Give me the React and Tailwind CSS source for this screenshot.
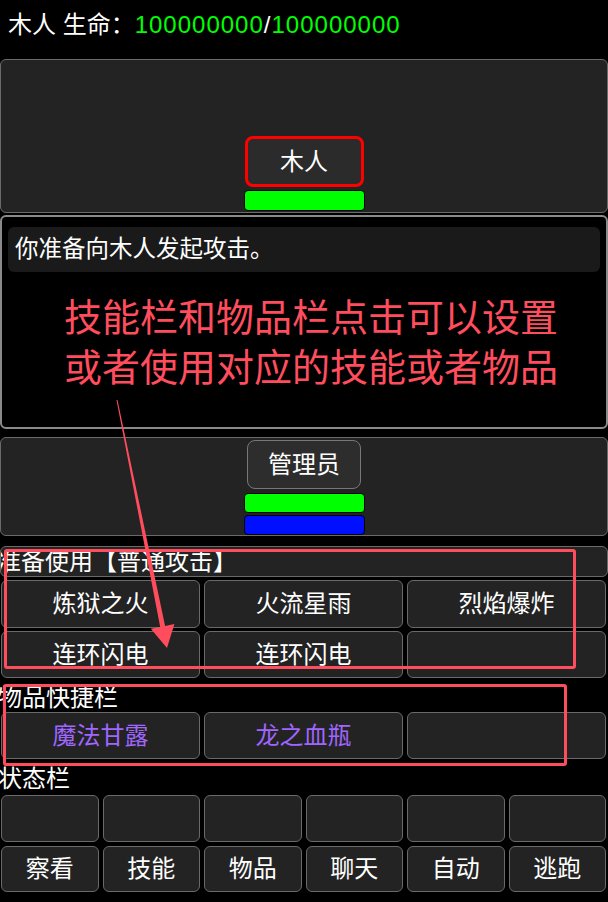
const font = { fontFamily: '"Liberation Sans", "Noto Sans CJK SC", sans-serif' };

const skills = ['炼狱之火', '火流星雨', '烈焰爆炸', '连环闪电', '连环闪电', ''];
const items = ['魔法甘露', '龙之血瓶', ''];
const actions = ['察看', '技能', '物品', '聊天', '自动', '逃跑'];

const Cell = ({ children, className = '' }) => (
  <div
    className={`flex items-center justify-center rounded-[6px] border border-[#6a6a6a] bg-[#232323] text-[24px] ${className}`}
  >
    {children}
  </div>
);

const Bar = ({ color }) => (
  <div className={`h-[20px] w-[121px] rounded-[4px] border border-black ${color}`} />
);

export default function App() {
  return (
    <div
      className="relative h-[902px] w-[608px] overflow-hidden bg-black text-white"
      style={font}
    >
      {/* 标题 */}
      <div className="flex h-[59px] items-start pl-[8px] pt-[10px] text-[24px] leading-[30px]">
        <span>木人 生命：</span>
        <span className="tracking-[1px] text-[#00ff00]">100000000</span>
        <span className="tracking-[1px]">/</span>
        <span className="tracking-[1px] text-[#00ff00]">100000000</span>
      </div>

      {/* 敌方 */}
      <div className="flex h-[154px] flex-col items-center justify-end rounded-[6px] border border-[#6a6a6a] bg-[#232323]">
        <div className="flex h-[51px] w-[119px] items-center justify-center rounded-[8px] border-[3px] border-[#ff0000] bg-[#2b2b2b] text-[24px]">
          木人
        </div>
        <div className="mb-[1px] mt-[3px] h-[21px] w-[121px] rounded-[4px] border border-black bg-[#00ff00]" />
      </div>

      {/* 战斗信息 */}
      <div className="mt-[2px] h-[214px] rounded-[6px] border-2 border-[#8a8a8a] bg-black px-[6px] pt-[10px]">
        <div className="flex h-[45px] items-center rounded-[6px] bg-[#1a1a1a] pl-[7px] text-[23.5px]">
          你准备向木人发起攻击。
        </div>
        <div className="mt-[21px] whitespace-nowrap pl-[56px] text-[38px] leading-[50px] text-[#ff4d5e]">
          <div>技能栏和物品栏点击可以设置</div>
          <div>或者使用对应的技能或者物品</div>
        </div>
      </div>

      {/* 我方 */}
      <div className="mt-[8px] flex h-[99px] flex-col items-center rounded-[6px] border border-[#6a6a6a] bg-[#232323] pt-[2px]">
        <div className="flex h-[50px] w-[114px] items-center justify-center rounded-[8px] border border-[#777] bg-[#2d2d2d] text-[24px]">
          管理员
        </div>
        <div className="mt-[4px] flex flex-col gap-[2px]">
          <Bar color="bg-[#00ff00]" />
          <Bar color="bg-[#0010ff]" />
        </div>
      </div>

      {/* 技能栏 */}
      <div className="mt-[10px] flex h-[31px] items-center overflow-hidden rounded-[6px] border border-[#6a6a6a] bg-[#232323] text-[24px]">
        <span className="-ml-[4px] whitespace-nowrap">准备使用【普通攻击】</span>
      </div>
      <div className="mt-[3px] grid grid-cols-3 grid-rows-[48px_47px] gap-x-[4px] gap-y-[3px] pl-[1px] pr-[2px]">
        {skills.map((s, i) => (
          <Cell key={i}>{s}</Cell>
        ))}
      </div>

      {/* 物品快捷栏 */}
      <div className="flex h-[34px] items-center pt-[6px] text-[24px]">
        <span className="-ml-[2px]">物品快捷栏</span>
      </div>
      <div className="grid grid-cols-3 gap-x-[4px] pl-[1px] pr-[2px]">
        {items.map((s, i) => (
          <Cell key={i} className="h-[47px] text-[#a066ff]">
            {s}
          </Cell>
        ))}
      </div>

      {/* 状态栏 */}
      <div className="flex h-[36px] items-center pt-[3px] text-[24px]">
        <span className="-ml-[2px]">状态栏</span>
      </div>
      <div className="grid grid-cols-6 gap-x-[4px] gap-y-[4px] pl-[1px] pr-[2px]">
        {actions.map((_, i) => (
          <Cell key={'s' + i} className="h-[47px]" />
        ))}
        {actions.map((a) => (
          <Cell key={a} className="h-[46px]">
            {a}
          </Cell>
        ))}
      </div>

      {/* 标注 */}
      <div className="absolute left-[4px] top-[549px] h-[120px] w-[572px] rounded-[3px] border-[3px] border-[#ff4d5e]" />
      <div className="absolute left-[3px] top-[684px] h-[82px] w-[564px] rounded-[3px] border-[3px] border-[#ff4d5e]" />
      <svg
        className="pointer-events-none absolute left-0 top-0"
        width="608"
        height="902"
        viewBox="0 0 608 902"
      >
        <polygon
          fill="#ff4d5e"
          points="117.5,400 116.5,400 160.2,626.9 150.8,628.8 167,648 174.4,624 165.1,625.9"
        />
      </svg>
    </div>
  );
}
